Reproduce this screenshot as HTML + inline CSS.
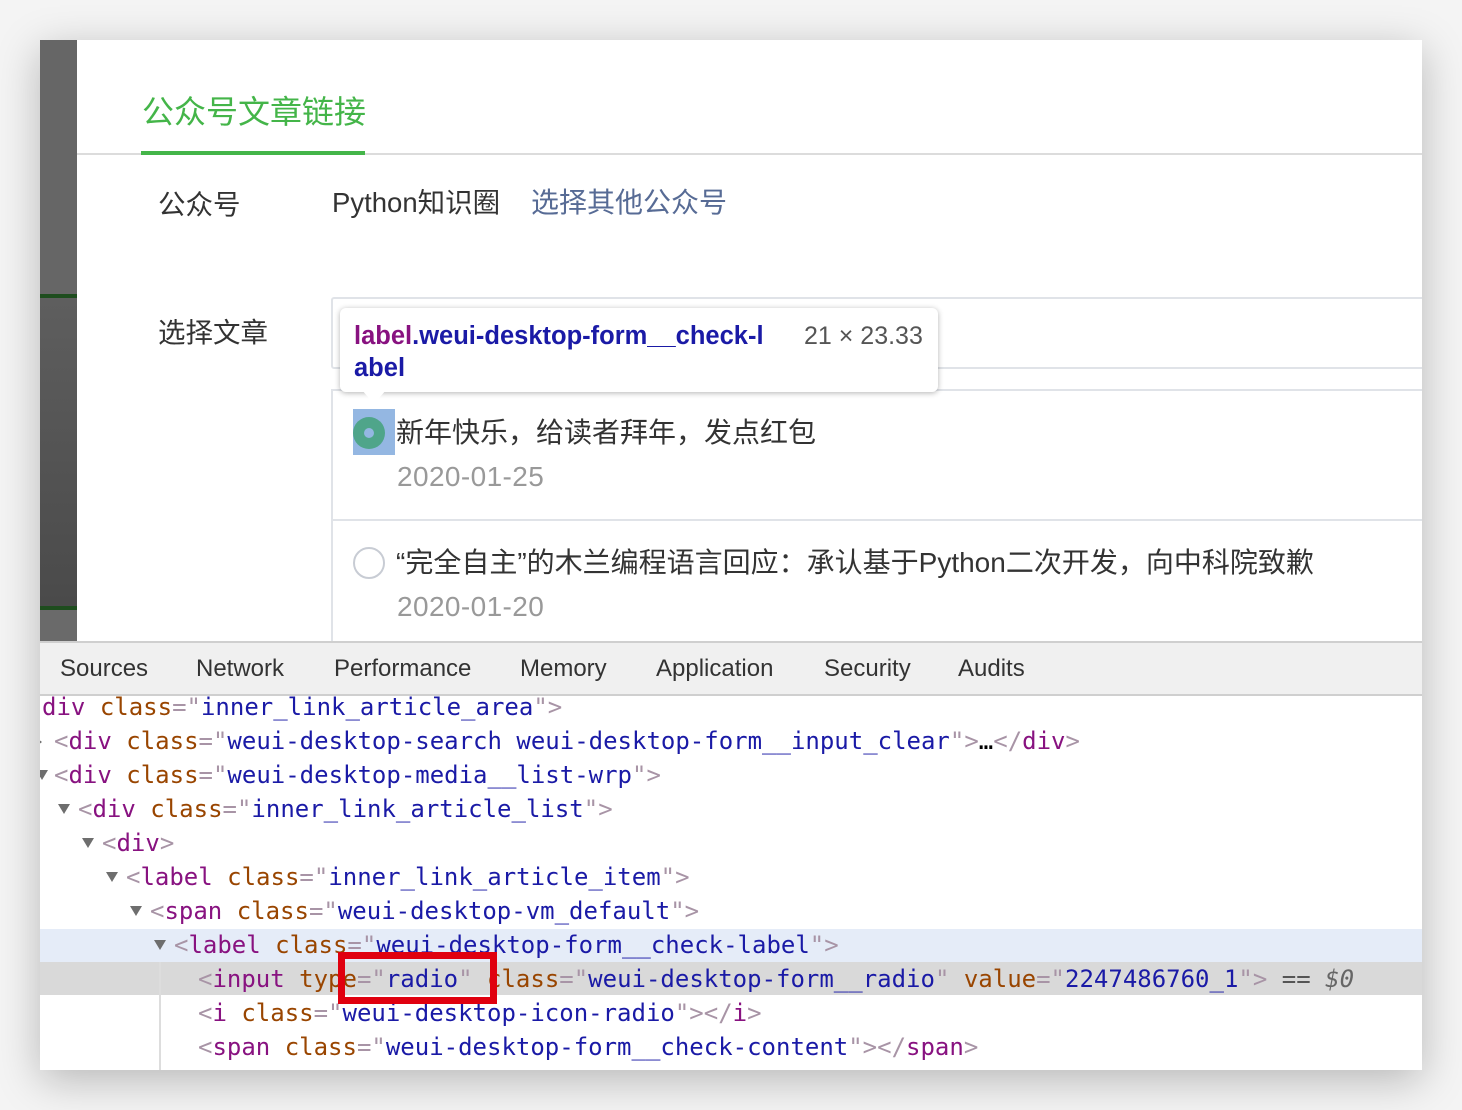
<!DOCTYPE html>
<html><head><meta charset="utf-8"><style>
*{margin:0;padding:0;box-sizing:border-box}
body{width:1462px;height:1110px;background:#f4f4f4;position:relative;overflow:hidden;font-family:"Liberation Sans","Noto Sans CJK SC",sans-serif}
.win{position:absolute;left:40px;top:40px;width:1382px;height:1030px;background:#fff;box-shadow:0 10px 40px rgba(0,0,0,.25);overflow:hidden}
.a{position:absolute;white-space:nowrap}
.cn{font-family:"Liberation Sans","Noto Sans CJK SC",sans-serif}
.code{position:absolute;left:0;font-family:"DejaVu Sans Mono","Liberation Mono",monospace;font-size:24px;white-space:nowrap;height:34px;line-height:34px}
.t{color:#881280}.b{color:#a894a6}.n{color:#994500}.v{color:#1a1aa6}
.tri{position:absolute;width:0;height:0;border-left:6px solid transparent;border-right:6px solid transparent;border-top:10px solid #6e6e6e}
.tab{position:absolute;top:612px;font-size:24px;color:#333;line-height:34px}
</style></head><body>
<div class="win">
<div class="a" style="left:0;top:0;width:37px;height:254px;background:#666"></div>
<div class="a" style="left:0;top:254px;width:37px;height:4px;background:#1e4d1e"></div>
<div class="a" style="left:0;top:258px;width:37px;height:308px;background:linear-gradient(#5e5e5e,#4a4a4a)"></div>
<div class="a" style="left:0;top:566px;width:37px;height:4px;background:#1e4d1e"></div>
<div class="a" style="left:0;top:570px;width:37px;height:32px;background:#6a6a6a"></div>

<div class="a" style="left:37px;top:113px;width:1345px;height:2px;background:#dcdcdc"></div>
<div class="a" style="left:101px;top:111px;width:224px;height:4px;background:#44b549"></div>
<div class="a cn" style="left:102px;top:52px;font-size:32px;color:#44b549;line-height:40px">公众号文章链接</div>

<div class="a cn" style="left:118px;top:147px;font-size:27.5px;color:#333;line-height:36px">公众号</div>
<div class="a cn" style="left:292px;top:145px;font-size:27.5px;color:#333;line-height:36px">Python知识圈</div>
<div class="a cn" style="left:491px;top:145px;font-size:28px;color:#576b95;line-height:36px">选择其他公众号</div>
<div class="a cn" style="left:118px;top:275px;font-size:27.5px;color:#333;line-height:36px">选择文章</div>

<div class="a" style="left:291px;top:257px;width:1100px;height:72px;border:2px solid #e0e3e8;border-radius:3px"></div>
<div class="a" style="left:291px;top:349px;width:1100px;height:300px;border:2px solid #e0e3e8"></div>
<div class="a" style="left:291px;top:479px;width:1100px;height:2px;background:#e0e3e8"></div>

<div class="a" style="left:313px;top:369px;width:42px;height:46px;background:#94b7e2"></div>
<div class="a" style="left:313px;top:377px;width:32px;height:32px;border-radius:50%;background:#4fa58a"></div>
<div class="a" style="left:324px;top:388px;width:10px;height:10px;border-radius:50%;background:#94b7e2"></div>
<div class="a cn" style="left:356px;top:375px;font-size:28px;color:#333;line-height:36px">新年快乐，给读者拜年，发点红包</div>
<div class="a" style="left:357px;top:419px;font-size:28px;color:#999;line-height:36px;letter-spacing:0.4px">2020-01-25</div>

<div class="a" style="left:313px;top:507px;width:32px;height:32px;border-radius:50%;border:2px solid #c8ccd4"></div>
<div class="a cn" style="left:356px;top:505px;font-size:28px;color:#333;line-height:36px">“完全自主”的木兰编程语言回应：承认基于Python二次开发，向中科院致歉</div>
<div class="a" style="left:357px;top:549px;font-size:28px;color:#999;line-height:36px;letter-spacing:0.4px">2020-01-20</div>

<div class="a" style="left:300px;top:268px;width:598px;height:84px;background:#fff;border-radius:6px;box-shadow:0 1px 6px rgba(0,0,0,.3)"></div>
<div class="a" style="left:322px;top:350px;width:0;height:0;border-left:12px solid transparent;border-right:12px solid transparent;border-top:14px solid #fff"></div>
<div class="a" style="left:314px;top:280px;font-size:25.5px;font-weight:bold;line-height:32px;color:#1a1aa6"><span style="color:#881280">label</span>.weui-desktop-form__check-l<br>abel</div>
<div class="a" style="left:764px;top:280px;font-size:25px;line-height:32px;color:#555">21 × 23.33</div>

<div class="a" style="left:0;top:601px;width:1382px;height:55px;background:#f0f0f0;border-top:2px solid #cfcfcf;border-bottom:2px solid #cfcfcf"></div>
<div class="tab" style="left:20px">Sources</div>
<div class="tab" style="left:156px">Network</div>
<div class="tab" style="left:294px">Performance</div>
<div class="tab" style="left:480px">Memory</div>
<div class="tab" style="left:616px">Application</div>
<div class="tab" style="left:784px">Security</div>
<div class="tab" style="left:918px">Audits</div>

<div class="a" style="left:0;top:889px;width:1382px;height:33px;background:#e5ecf8"></div>
<div class="a" style="left:0;top:922px;width:1382px;height:33px;background:#d9d9d9"></div>
<div class="a" style="left:119px;top:922px;width:2px;height:108px;background:#ddd"></div>

<div class="code" style="top:650px;left:2px"><span class="t">div</span> <span class="n">class</span><span class="b">="</span><span class="v">inner_link_article_area</span><span class="b">"&gt;</span></div>
<div class="tri" style="left:-6px;top:696px;border-top:6px solid transparent;border-bottom:6px solid transparent;border-left:8px solid #6e6e6e;border-right:0"></div>
<div class="code" style="top:684px;left:14px"><span class="b">&lt;</span><span class="t">div</span> <span class="n">class</span><span class="b">="</span><span class="v">weui-desktop-search weui-desktop-form__input_clear</span><span class="b">"&gt;</span>…<span class="b">&lt;/</span><span class="t">div</span><span class="b">&gt;</span></div>
<div class="tri" style="left:-4px;top:730px"></div>
<div class="code" style="top:718px;left:14px"><span class="b">&lt;</span><span class="t">div</span> <span class="n">class</span><span class="b">="</span><span class="v">weui-desktop-media__list-wrp</span><span class="b">"&gt;</span></div>
<div class="tri" style="left:18px;top:764px"></div>
<div class="code" style="top:752px;left:38px"><span class="b">&lt;</span><span class="t">div</span> <span class="n">class</span><span class="b">="</span><span class="v">inner_link_article_list</span><span class="b">"&gt;</span></div>
<div class="tri" style="left:42px;top:798px"></div>
<div class="code" style="top:786px;left:62px"><span class="b">&lt;</span><span class="t">div</span><span class="b">&gt;</span></div>
<div class="tri" style="left:66px;top:832px"></div>
<div class="code" style="top:820px;left:86px"><span class="b">&lt;</span><span class="t">label</span> <span class="n">class</span><span class="b">="</span><span class="v">inner_link_article_item</span><span class="b">"&gt;</span></div>
<div class="tri" style="left:90px;top:866px"></div>
<div class="code" style="top:854px;left:110px"><span class="b">&lt;</span><span class="t">span</span> <span class="n">class</span><span class="b">="</span><span class="v">weui-desktop-vm_default</span><span class="b">"&gt;</span></div>
<div class="tri" style="left:114px;top:900px"></div>
<div class="code" style="top:888px;left:134px"><span class="b">&lt;</span><span class="t">label</span> <span class="n">class</span><span class="b">="</span><span class="v">weui-desktop-form__check-label</span><span class="b">"&gt;</span></div>
<div class="code" style="top:922px;left:158px"><span class="b">&lt;</span><span class="t">input</span> <span class="n">type</span><span class="b">="</span><span class="v">radio</span><span class="b">"</span> <span class="n">class</span><span class="b">="</span><span class="v">weui-desktop-form__radio</span><span class="b">"</span> <span class="n">value</span><span class="b">="</span><span class="v">2247486760_1</span><span class="b">"&gt;</span> <span style="color:#555">==</span> <i style="color:#666">$0</i></div>
<div class="code" style="top:956px;left:158px"><span class="b">&lt;</span><span class="t">i</span> <span class="n">class</span><span class="b">="</span><span class="v">weui-desktop-icon-radio</span><span class="b">"&gt;&lt;/</span><span class="t">i</span><span class="b">&gt;</span></div>
<div class="code" style="top:990px;left:158px"><span class="b">&lt;</span><span class="t">span</span> <span class="n">class</span><span class="b">="</span><span class="v">weui-desktop-form__check-content</span><span class="b">"&gt;&lt;/</span><span class="t">span</span><span class="b">&gt;</span></div>

<div class="a" style="left:298px;top:912px;width:159px;height:52px;border:7px solid #e0000f"></div>
</div>
</body></html>
